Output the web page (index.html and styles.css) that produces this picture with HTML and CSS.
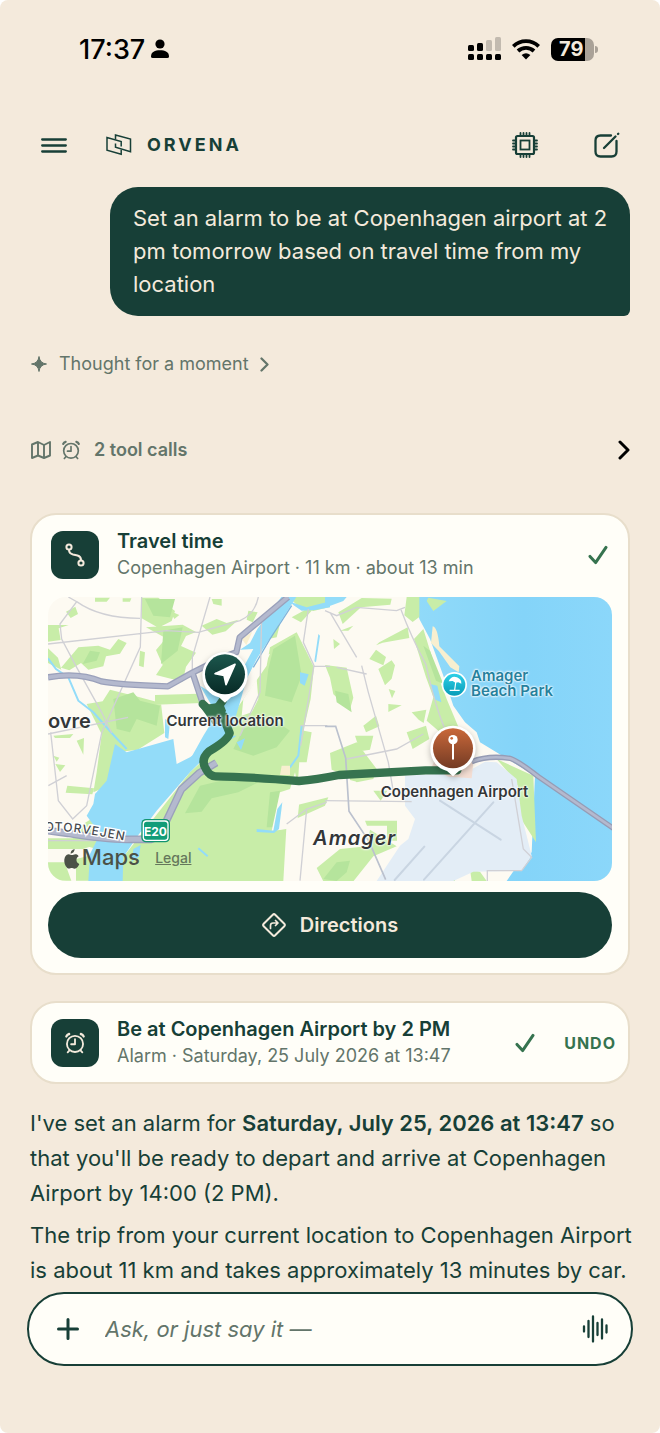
FILE: index.html
```html
<!DOCTYPE html>
<html lang="en">
<head>
<meta charset="utf-8">
<meta name="viewport" content="width=device-width, initial-scale=1">
<title>Orvena</title>
<link rel="stylesheet" href="styles.css">
</head>
<body>
<svg class="defs" aria-hidden="true">
  <symbol id="alarm" viewBox="0 0 24 24">
    <g fill="none" stroke="currentColor" stroke-width="2" stroke-linecap="round" stroke-linejoin="round">
      <circle cx="12" cy="13" r="8.8"/><path d="M12 7.8V13.4H7.8M6 20l-2 2.2M18 20l2 2.2"/><path stroke-width="2.600" d="M2.600 4.800q.8-2 3-2.600M21.400 4.800q-.8-2-3-2.600"/>
    </g>
  </symbol>
  <symbol id="check" viewBox="0 0 20 20">
    <path d="M2 11.400 7.600 17.600 18 2.400" fill="none" stroke="currentColor" stroke-width="3" stroke-linecap="round" stroke-linejoin="round"/>
  </symbol>
  <symbol id="chevron" viewBox="0 0 12 20">
    <path d="M2 2l8 8-8 8" fill="none" stroke="currentColor" stroke-width="3" stroke-linecap="round" stroke-linejoin="round"/>
  </symbol>
</svg>
<div class="app">
  <div class="status">
    <div class="clock"><span>17:37</span>
      <svg width="18" height="20" viewBox="0 0 18 20"><circle cx="9" cy="5" r="4.6"/><path d="M0 17.500C0 13 4 11.300 9 11.300S18 13 18 17.500Q18 19 16.300 19H1.700Q0 19 0 17.500z"/></svg>
    </div>
    <div class="signals">
      <svg width="33" height="24" viewBox="0 0 33 24"><rect y="8" width="6" height="6" rx="1.500"/><rect x="9" y="6" width="6" height="8" rx="1.500"/><g opacity=".2"><rect x="18" y="3" width="6" height="11" rx="1.500"/><rect x="27" y="0" width="6" height="14" rx="1.500"/></g><rect y="17" width="6" height="6" rx="1.500"/><rect x="9" y="17" width="6" height="6" rx="1.500"/><rect x="18" y="17" width="6" height="6" rx="1.500"/><rect x="27" y="17" width="6" height="6" rx="1.500"/></svg>
      <svg width="28" height="22" viewBox="0 0 28 22"><g fill="none" stroke="#000" stroke-width="3.800"><path d="M1.300 8.300a18.300 18.300 0 0 1 25.400 0"/><path d="M6 13a11.600 11.600 0 0 1 16 0"/></g><path d="M14 21.500l-4.400-4.500q4.400-3.600 8.800 0z"/></svg>
      <div class="battery"><span class="cell">79</span><span class="nub"></span></div>
    </div>
  </div>

  <header class="topbar">
    <button class="icon-btn" aria-label="Menu"><svg width="26" height="16" viewBox="0 0 26 16" fill="none" stroke="currentColor" stroke-width="2.300" stroke-linecap="round"><path d="M1.200 2.500h23.600M1.200 8.500h23.600M1.200 14.500h23.600"/></svg></button>
    <div class="brand">
      <svg width="26" height="22" viewBox="0 0 26 22" fill="none" stroke="currentColor" stroke-width="1.500"><path d="M15.200 15.800V20.200L1 16.200V3.500L15.200 7.500V12.500"/><path d="M9.500 5.500V1L24.500 5V17.800L9.500 13.300V9.500"/></svg>
      <span>ORVENA</span>
    </div>
    <button class="icon-btn" aria-label="Models"><svg width="26" height="26" viewBox="0 0 26 26" fill="none" stroke="currentColor" stroke-width="2.200"><rect x="4" y="4" width="18" height="18" rx="1.500"/><rect x="8.500" y="8.500" width="9" height="9" stroke-width="1.800"/><path stroke-width="1.800" stroke-linecap="round" d="M8.500 1v3M11.500 1v3M14.500 1v3M17.500 1v3M8.500 22v3M11.500 22v3M14.500 22v3M17.500 22v3M1 8.500h3M1 11.500h3M1 14.500h3M1 17.500h3M22 8.500h3M22 11.500h3M22 14.500h3M22 17.500h3"/></svg></button>
    <button class="icon-btn" aria-label="New chat"><svg width="26" height="26" viewBox="0 0 26 26" fill="none" stroke="currentColor" stroke-width="2.300" stroke-linecap="round"><path d="M17 3.500H6.500Q1.500 3.500 1.500 8.500V19.500Q1.500 24.500 6.500 24.500H17.500Q22.500 24.500 22.500 19.500V9"/><path d="M10 16 21.500 4.500M24 2l.3-.3"/></svg></button>
  </header>

  <main class="chat">
    <p class="bubble">Set an alarm to be at Copenhagen airport at 2 pm tomorrow based on travel time from my location</p>

    <button class="thought">
      <svg width="18" height="18" viewBox="0 0 18 18"><path fill="currentColor" d="M9 1.500Q9.800 8.200 16.500 9 9.800 9.800 9 16.500 8.200 9.800 1.500 9 8.200 8.200 9 1.500z" stroke="currentColor" stroke-linejoin="round"/></svg>
      <span>Thought for a moment</span>
      <svg width="9" height="15"><use href="#chevron"/></svg>
    </button>

    <button class="tools">
      <svg width="20" height="20" viewBox="0 0 20 20" fill="none" stroke="currentColor" stroke-width="1.900" stroke-linejoin="round"><path d="M1 4.500 7 2l6 3 6-3V15.500L13 18 7 15.500 1 18zM7 2v13.500M13 5v13"/></svg>
      <svg width="20" height="20"><use href="#alarm"/></svg>
      <span>2 tool calls</span>
      <svg class="more" width="12" height="20"><use href="#chevron"/></svg>
    </button>

    <section class="card">
      <div class="card-head">
        <div class="tile"><svg width="22" height="26" viewBox="0 0 22 26" fill="none" stroke="currentColor" stroke-width="2"><circle cx="5" cy="5" r="2.600"/><circle cx="17" cy="21" r="2.600"/><path d="M5 7.800Q5 11.500 9 12.500L13.500 13.500Q17 14.500 17 18"/></svg></div>
        <div class="info"><h2>Travel time</h2><p>Copenhagen Airport · 11 km · about 13 min</p></div>
        <svg class="done" width="20" height="20"><use href="#check"/></svg>
      </div>

      <div class="map">
        <svg class="map-art" viewBox="24 24 1692 852" aria-hidden="true">
          <defs>
            <linearGradient id="sea"><stop offset="0" stop-color="#91daf9"/><stop offset=".55" stop-color="#84d4f9"/><stop offset="1" stop-color="#8bd7fa"/></linearGradient>
            <linearGradient id="pinGreen" x2="0" y2="1"><stop stop-color="#1c574d"/><stop offset="1" stop-color="#082a26"/></linearGradient>
            <linearGradient id="pinRust" x2="0" y2="1"><stop stop-color="#c9683a"/><stop offset="1" stop-color="#743b24"/></linearGradient>
            <linearGradient id="pinBlue" x2="0" y2="1"><stop stop-color="#2ed0e7"/><stop offset="1" stop-color="#089cb8"/></linearGradient>
          </defs>
          <rect x="24" y="24" width="1692" height="852" fill="#fdfaf2"/>
          <path fill="url(#sea)" d="M1125 24H1716V876H1400L1425 840 1475 790 1485 560 1320 460 1310 430 1275 400 1240 350 1210 260 1170 150 1138 90z"/>

          <g fill="#c8eda8">
            <path d="M24 108h62l-30 10 6 35-38 5zM24 178l30 28 10 36-40-20zM115 175l60-5 35 12 25-32 25 12-20 32-42 8-8 30-45 10-22-20-35 22-25-8zM165 26h45l-10 12h-35zM248 28h26l-4 10h-22zM78 68l28-15 8 22-22 12zM305 26h50l50 40-10 30-40 20-50-28zM318 115l110-8 40 22-30 12-15 30 45 20-30 42-10 45-80-20 20-30-20-45 30-35zM485 110l45-20 30 12 35-10-38 35-40 10zM515 30h30v20l-25-5zM390 66l28 12-15 12zM625 65l28 5-15 30-18-8zM300 185l15 5-4 45-14-5zM140 345l48-8 22-35 78 20 75 20 10 90-80 50-80 10-40-80zM345 318l130-4 10 28-140 5z"/>
            <path d="M590 360 680 230 690 175 770 130 800 190 822 235 812 330 782 460 775 560 740 700 730 876H245V810L300 740 450 550 570 440zM690 120l30-15-10 40-25 5zM755 85l45-25 15 5-32 35zM745 24h125v30l-50 12-40-10z"/>
            <path d="M185 435l30-5 25 45-35 115-45 20 10-60zM82 590l80 8-5 18-80-5zM90 730l60-38 40 50-12 40-72-20zM24 748h100l35 22-30 10H24zM24 820h50l20 55H24zM108 810l40-10 10 75h-50zM40 440l60-5-10 12H45zM110 455l22-8-2 50zM740 520h60l15-90-50-10-60 60zM40 500l18 6-8 12zM46 525l30 4-16 20z"/>
            <path d="M895 70l30-18 40-25 90 2-4 18-88 8-55 50zM1018 160l85-45 5 32-80 14-20 8zM900 125l40-15-15 15zM988 210l20-28 30 22-8 25zM1015 240l40-26 10 15-10 40-20 20zM855 228l65 8 20 90-10 35-50-45-10-50zM1100 24h38l0 60-20 15-25-20zM1122 150l28-30 40 130 30 80 40 95-30 30-70-60 20-70-22-60zM970 410l38-30 10 32-40 18zM1045 345l40 4-40 20zM1115 370l44-8-8 40-15-10zM1100 430l58-20 10 40-50 30zM1046 300l20 6-10 22zM880 150l20 15-18 15zM1165 26l55 10-40 30-20-30z"/>
            <path d="M870 492l80-32 30 40 30 40-10 30-50 10-25-18-50-20zM945 440h55l-10 42-30 5zM1370 510l110 50 8 200-45-70-10-100-20-30zM975 695h96v60h-30v-45h-60zM900 780l80-8 10-50 80 50-70 30-60 75H850l-20-40zM1290 840l30 8 20 28h-45zM1220 865h25v11h-35zM1000 605h42l-20 30zM930 560h20v18l-20-5zM1075 790l20-20-8 30zM745 655l120-30-10 25-110 50z"/>
          </g>
          <g fill="#b5e49c">
            <path d="M315 30h90l-15 55-50-5zM370 125l58-10-15 70-50 40zM220 330l60-20 20 25 60 15-10 60-60-20-20 40-40-10zM700 180l65-40 20 120-30 80-80-20 10-80zM690 610l30-5-20 110h-20zM885 305l40 10 10 55-45-30zM480 590l85-20 90 10-60 30-80 18-30 40-50 5zM850 870l40-50 40-5-10 35-30 26z"/>
            <path d="M610 420l80-35 60 40-40 50-70 25-60-20zM1150 170l20 15 40 100-22-10zM150 185l30 5-10 25-42 10z"/>
          </g>
          <path fill="#fdfaf2" d="M720 610l30-10 15-50 15 70-10 95-50 8-25 2zM655 205l35-10-20 40-18 10zM610 330l40-60 5 60-20 40-30 10z"/>
          <g fill="#93dcf9">
            <path d="M724 24h45L650 210 620 270 600 340 570 440 500 500 440 530 490 440 530 375 480 290 520 315 570 310 640 180l-40 2 30-20 22-42z"/>
            <path d="M225 465 260 490 400 450 410 525 450 505 540 440 590 440 500 500 450 550 350 665 290 745 250 805 248 876H145L150 795 180 735 140 680 160 645 165 615 200 575z"/>
            <path d="M375 390l15 8-5 52-10-5zM745 35l25 10 30 10 70-18v18l-45 8-40 2-22-15zM780 250l26 6-12 34-14-8zM650 720l50 5 12-65 15-20-10 80-15 12-52-3zM590 460l25-12-12 35zM835 135l5 5-12 80-5-3zM855 24h65l-10 12-55 20zM1170 285l22 5 12 50-18-8zM280 780l22-12-5 35-22 15z"/>
          </g>
          <path d="M24 208 48 240 85 265 115 335 160 370 215 432 260 480M785 410l-10 90-25 35M475 778l28 24" fill="none" stroke="#93dcf9" stroke-width="6"/>
          <path d="M755 50 690 150 640 235" fill="none" stroke="#7db4dc" stroke-width="4"/>
          <path fill="#f8efd0" d="M1178 112q15 2 20 60l60 60-2 18-25-15-34-48-24-25zM605 150l32-22-18 40zM725 530h25v28h-30z"/>
          <path fill="#e3edf6" d="M1095 560 1280 550 1335 518 1370 520 1430 570 1445 680 1475 800 1445 845 1300 848 1240 876H1010L1080 770 1105 750 1125 690 1095 650z"/>
          <path fill="#f4ded3" d="M1190 500l110 20-5 48-70-5-50-28z"/>
          <g fill="none" stroke="#c9d5e2" stroke-width="6" stroke-linecap="round"><path d="M1200 635 1382 752M1360 640 1152 872M1153 773 1064 873"/></g>

          <g fill="none" stroke="#d0d0d5" stroke-width="4">
            <path d="M85 24 110 38 60 105 65 150 110 235 185 370 215 432M110 38q70 50 190 50M305 24l-4 150L185 432 140 650 98 690 55 635 32 430M24 165 380 125 475 130 600 95Q645 75 655 24M510 24 457 205v40M805 60l-15 100 32 70-30 180-10 60M665 80l-5 230-60 130M24 435l240-50M782 410h80M800 660l-20 215M24 755h140M860 640l-60 20-60 45M80 560l-55 30M820 232h50"/>
            <path d="M870 70 950 205M855 65l35 15 60-25 120 10 25-10M965 230l20 80 60 210 18 105M890 235l90 20M855 635l260 3M920 510l150-30 80-45"/>
            <path d="M1083 62q30 80 75 165 28 130 60 200l30 45M1415 570l35 210 25 25-30 40H1342v31"/>
            <path stroke="#bbc1ce" stroke-width="5" d="M855 412h32l30 95 10 160 60 90 50 115"/>
          </g>
          <g fill="none" stroke-linejoin="round">
            <path stroke="#9ba1bb" stroke-width="19" d="M24 265q90-16 160 12 50 10 200 15l75-42 90-45 40-15 10-45 145-121M457 250l30 90"/>
            <path stroke="#b4b9ce" stroke-width="11" d="M24 265q90-16 160 12 50 10 200 15l75-42 90-45 40-15 10-45 145-121M457 250l30 90"/>
            <path stroke="#9ba1bb" stroke-width="23" d="M24 725l60 8q120 20 190 18h60q20-5 45-55l45-95 55-50 50-30"/>
            <path stroke="#b4b9ce" stroke-width="15" d="M24 725l60 8q120 20 190 18h60q20-5 45-55l45-95 55-50 50-30"/>
            <path stroke="#969cb5" stroke-width="16" d="M1295 518q50-20 115-10 25 8 85 55l225 155"/>
            <path stroke="#b4b9ce" stroke-width="8" d="M1295 518q50-20 115-10 25 8 85 55l225 155"/>
          </g>
          <path d="M488 345l32 30 28-40M552 382q5 25 17 50-5 22-62 55-28 25-8 55 10 20 28 20 90 1 250 14 50-4 120-18l260-14h95" fill="none" stroke="#36734f" stroke-width="25" stroke-linecap="round" stroke-linejoin="round"/>
          <path fill="#36734f" d="M478 350l40 55h22l18-40-10-25z"/>

          <g filter="drop-shadow(0 8px 10px #0004)">
            <path fill="#fff" d="M487 257a68 68 0 1 1 136 0c0 38-25 61-50 68l-18 16-18-16c-28-7-50-30-50-68zM1171 478a68 68 0 1 1 136 0c0 38-25 61-50 68l-18 16-18-16c-28-7-50-30-50-68z"/>
          </g>
          <circle cx="555" cy="256" r="60" fill="url(#pinGreen)"/>
          <path fill="#fff" stroke="#fff" stroke-width="5" stroke-linejoin="round" d="M585 226 525 254l27 5 6 28z"/>
          <circle cx="1239" cy="478" r="60" fill="url(#pinRust)"/>
          <path d="M1239 452v57" stroke="#fff" stroke-width="6" stroke-linecap="round"/><circle cx="1239" cy="452" r="14" fill="#fff"/><circle cx="1235" cy="448" r="4" fill="#c9683a"/>
          <circle cx="1243" cy="287" r="38" fill="#fff"/><circle cx="1243" cy="287" r="33" fill="url(#pinBlue)"/>
          <path fill="#fff" d="M1226 277q8-18 25-12 14 6 13 19l-9-4-9 1-8-5z"/><path d="M1248 274l-4 29M1229 304h30" stroke="#fff" stroke-width="3.500"/>

          <g transform="translate(304 690)"><rect width="86" height="70" rx="14" fill="#12946f"/><rect x="4" y="4" width="78" height="62" rx="11" fill="#fff"/><rect x="8" y="8" width="70" height="54" rx="8" fill="#129c78"/></g>
          <path fill="#4b5147" d="M104 780q-1 12-12 14-1-10 12-14zM94 798c7 0 9-4 15-2q5 2 7 6c-10 6-8 19 2 23-3 8-8 14-14 14-5 0-7-3-11-2-5 2-8 3-12-1-12-12-11-38 5-40z"/>
          <path id="street" d="M14 726Q70 724 130 733T285 761" fill="none"/>
          <text class="street"><textPath href="#street">OTORVEJEN</textPath></text>
        </svg>
        <span class="label town">ovre</span>
        <span class="label here">Current location</span>
        <span class="label beach">Amager<br>Beach Park</span>
        <span class="label airport">Copenhagen Airport</span>
        <span class="label island">Amager</span>
        <span class="label shield">E20</span>
        <span class="label maps">Maps</span>
        <a class="label legal" href="#">Legal</a>
      </div>

      <button class="directions">
        <svg width="24" height="24" viewBox="0 0 24 24" fill="none" stroke="currentColor" stroke-width="2" stroke-linejoin="round" stroke-linecap="round"><path d="M10.800 1.700 1.700 10.800q-1.200 1.200 0 2.400L10.800 22.300q1.200 1.200 2.400 0L22.300 13.200q1.200-1.200 0-2.400L13.200 1.700q-1.200-1.200-2.400 0z"/><path stroke-width="1.700" d="M8.500 15.500V12.500Q8.500 10 11 10H15.500M13.500 7.500 16 10l-2.500 2.500"/></svg>
        <span>Directions</span>
      </button>
    </section>

    <section class="card alarm-card">
      <div class="card-head">
        <div class="tile"><svg width="22" height="22"><use href="#alarm"/></svg></div>
        <div class="info"><h2>Be at Copenhagen Airport by 2 PM</h2><p>Alarm · Saturday, 25 July 2026 at 13:47</p></div>
        <svg class="done" width="20" height="20"><use href="#check"/></svg>
        <button class="undo">UNDO</button>
      </div>
    </section>

    <div class="answer">
      <p>I've set an alarm for <strong>Saturday, July 25, 2026 at 13:47</strong> so that you'll be ready to depart and arrive at Copenhagen Airport by 14:00 (2 PM).</p>
      <p>The trip from your current location to Copenhagen Airport is about 11 km and takes approximately 13 minutes by car.</p>
    </div>
  </main>

  <form class="composer">
    <button type="button" class="icon-btn" aria-label="Add"><svg width="22" height="22" viewBox="0 0 22 22" stroke="currentColor" stroke-width="3" stroke-linecap="round"><path d="M11 1.500v19M1.500 11h19"/></svg></button>
    <input type="text" aria-label="Message" placeholder="Ask, or just say it —">
    <button type="button" class="icon-btn" aria-label="Voice"><svg width="26" height="28" viewBox="0 0 26 28" stroke="currentColor" stroke-width="2.300" stroke-linecap="round"><path d="M2 11.500v5M6.500 6v16M11 1.500v25M15.500 8v12M20 4.500v19M24.500 10.500v7"/></svg></button>
  </form>
</div>
</body>
</html>
```

FILE: styles.css
```css
* { box-sizing: border-box; }
body { margin: 0; background: #fff; font-family: Inter, "Liberation Sans", sans-serif; color: #173f37; }
h2, p { margin: 0; }
button { padding: 0; border: 0; background: none; color: inherit; font: inherit; cursor: pointer; }
svg { display: block; flex: none; }
.defs { position: absolute; width: 0; height: 0; }
.app { min-height: 100vh; background: #f4eadc; border-radius: 8px; overflow: hidden; display: flex; flex-direction: column; }

.status { display: flex; justify-content: space-between; align-items: center; height: 98px; padding: 0 62px 0 79px; color: #000; }
.clock { display: flex; align-items: center; gap: 6px; font-size: 27px; font-weight: 500; }
.signals { display: flex; align-items: center; gap: 11px; }
.battery { display: flex; align-items: center; gap: 1px; }
.cell { width: 43px; height: 23px; padding-left: 8px; border-radius: 7px; background: linear-gradient(90deg, #000 79%, #aaa298 79%); color: #f4eadc; font-size: 20px; line-height: 23px; font-weight: 700; }
.nub { width: 3px; height: 7px; border-radius: 0 3px 3px 0; background: #aaa298; }

.topbar { display: flex; align-items: center; height: 89px; padding: 4px 40px 0 41px; }
.icon-btn { display: flex; align-items: center; justify-content: center; }
.brand { display: flex; align-items: center; gap: 15px; flex: 1; margin-left: 39px; font-size: 18px; font-weight: 700; letter-spacing: 3px; }
.topbar .icon-btn + .icon-btn { margin-left: 56px; }

.chat { display: flex; flex-direction: column; padding: 0 30px; }
.bubble { align-self: flex-end; width: 520px; max-width: 87%; padding: 15px 20px 15px 23px; border-radius: 28px 28px 6px 28px; background: #173f37; color: #f4eadc; font-size: 22px; line-height: 33px; }
.thought, .tools { display: flex; align-items: center; color: #63756a; font-size: 18px; line-height: 24px; text-align: left; }
.thought { align-self: flex-start; gap: 11px; margin-top: 36px; }
.tools { margin-top: 62px; gap: 10px; padding-left: 1px; font-weight: 600; }
.tools span { flex: 1; margin-left: 3px; }
.more { color: #000; }

.card { margin-top: 51px; padding: 13px 16px 15px; border: 2px solid #e8decb; border-radius: 26px; background: #fffef8; }
.card-head { display: flex; align-items: center; padding: 0 4px 0 3px; }
.tile { display: grid; place-items: center; width: 48px; height: 48px; flex: none; border-radius: 12px; background: #173f37; color: #f4eadc; }
.info { flex: 1; margin-left: 18px; white-space: nowrap; }
.info h2 { font-size: 20px; line-height: 27px; font-weight: 600; }
.info p { color: #63756a; font-size: 18px; line-height: 26px; }
.done { color: #36734f; }
.directions { display: flex; align-items: center; justify-content: center; gap: 14px; width: 100%; height: 66px; margin-top: 11px; border-radius: 33px; background: #173f37; color: #f4eadc; font-size: 20px; font-weight: 600; }
.alarm-card { margin-top: 26px; padding-bottom: 13px; }
.alarm-card .card-head { padding-right: 0; margin-right: -4px; }
.undo { margin-left: 29px; color: #36734f; font-size: 16px; font-weight: 700; letter-spacing: 1px; }

.map { position: relative; margin-top: 16px; border-radius: 18px; overflow: hidden; }
.map-art { width: 100%; height: auto; }
.label { position: absolute; color: #333638; font-size: 15px; line-height: 16px; font-weight: 600; white-space: nowrap; text-shadow: 0 0 2px #fff, 0 0 2px #fff, 0 0 3px #fff; }
.town { left: 0; top: 40%; font-size: 20px; line-height: 20px; }
.here { left: 21%; top: 41%; }
.beach { left: 75%; top: 25%; color: #26819d; line-height: 15px; }
.airport { left: 59%; top: 66%; }
.island { left: 47%; top: 81%; font-size: 20px; line-height: 22px; font-style: italic; letter-spacing: 1px; }
.shield { left: 17%; top: 80%; color: #fff; font-size: 12px; font-weight: 700; text-shadow: none; }
.maps { left: 6%; top: 87%; color: #4b5147; font-size: 22px; line-height: 26px; font-weight: 500; text-shadow: none; }
.legal { left: 19%; top: 89%; color: #65775b; font-size: 14px; font-weight: 500; text-shadow: none; }
.street { fill: #484b50; stroke: #fff; stroke-width: 8px; paint-order: stroke; font-size: 36px; font-weight: 500; letter-spacing: 3px; }

.answer { display: flex; flex-direction: column; gap: 7px; margin: 22px -10px 0 0; font-size: 22px; line-height: 35px; }
.answer strong { font-weight: 600; }

.composer { display: flex; align-items: center; height: 74px; margin: 4px 27px 0; padding: 0 23px 0 28px; border: 2px solid #173f37; border-radius: 37px; background: #fffef8; }
.composer input { flex: 1; min-width: 0; margin: 0 20px 0 26px; padding: 0; border: 0; outline: 0; background: none; color: #173f37; font: 22px Inter, "Liberation Sans", sans-serif; }
.composer input::placeholder { color: #63756a; font-style: italic; opacity: 1; }
```
